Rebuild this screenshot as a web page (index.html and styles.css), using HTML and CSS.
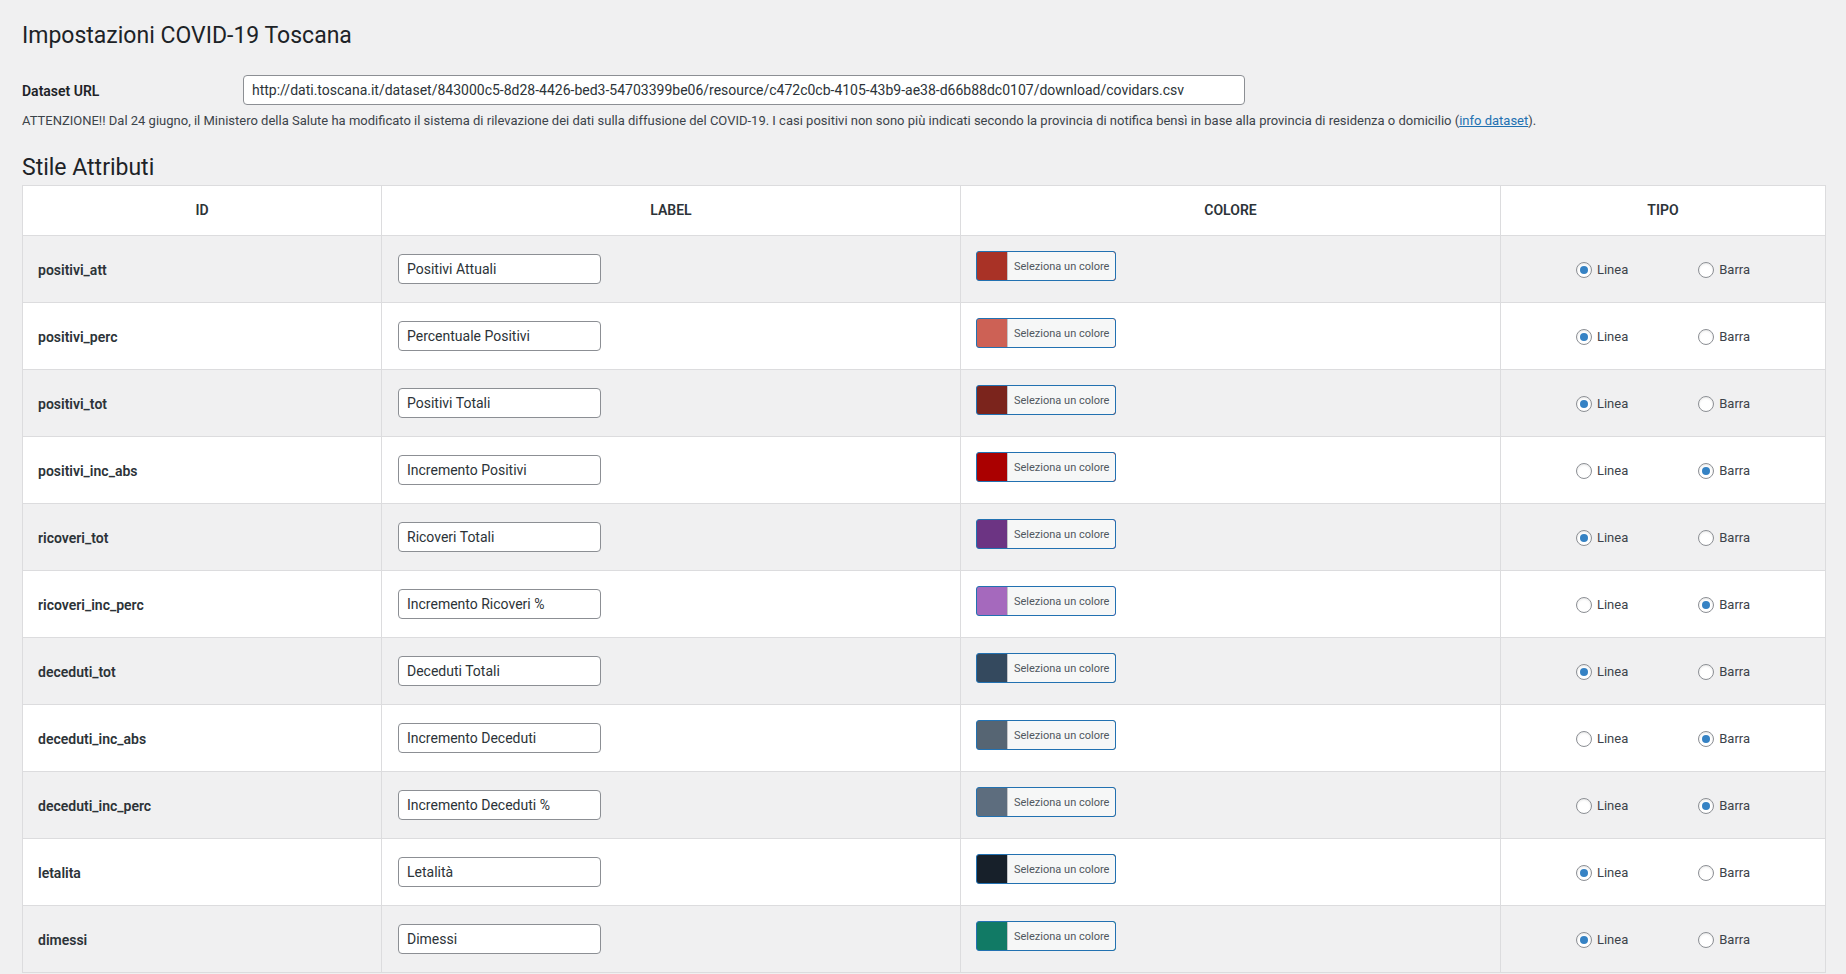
FILE: index.html
```html
<!DOCTYPE html>
<html lang="it">
<head>
<meta charset="utf-8">
<title>Impostazioni COVID-19 Toscana</title>
<link rel="stylesheet" href="styles.css">
</head>
<body>
<div class="wrap">
  <h1 class="page-title">Impostazioni COVID-19 Toscana</h1>

  <div class="form-row">
    <label class="form-label" for="dataset-url">Dataset URL</label>
    <input class="text-input url-input" id="dataset-url" type="text" value="http://dati.toscana.it/dataset/843000c5-8d28-4426-bed3-54703399be06/resource/c472c0cb-4105-43b9-ae38-d66b88dc0107/download/covidars.csv">
  </div>
  <p class="notice">ATTENZIONE!! Dal 24 giugno, il Ministero della Salute ha modificato il sistema di rilevazione dei dati sulla diffusione del COVID-19. I casi positivi non sono più indicati secondo la provincia di notifica bensì in base alla provincia di residenza o domicilio (<a href="#" class="link">info dataset</a>).</p>

  <h2 class="section-title">Stile Attributi</h2>

  <table class="attr-table">
    <colgroup>
      <col class="col-id">
      <col class="col-label">
      <col class="col-color">
      <col class="col-type">
    </colgroup>
    <thead>
      <tr><th>ID</th><th>LABEL</th><th>COLORE</th><th>TIPO</th></tr>
    </thead>
    <tbody>
      <tr>
        <td class="id-cell">positivi_att</td>
        <td><input class="text-input label-input" type="text" value="Positivi Attuali"></td>
        <td><button class="color-result" style="background-color:#a93226"><span class="color-result-text">Seleziona un colore</span></button></td>
        <td class="type-cell"><div class="radio-group"><label class="radio-opt"><input type="radio" name="t1" checked>Linea</label><label class="radio-opt"><input type="radio" name="t1">Barra</label></div></td>
      </tr>
      <tr>
        <td class="id-cell">positivi_perc</td>
        <td><input class="text-input label-input" type="text" value="Percentuale Positivi"></td>
        <td><button class="color-result" style="background-color:#cd6155"><span class="color-result-text">Seleziona un colore</span></button></td>
        <td class="type-cell"><div class="radio-group"><label class="radio-opt"><input type="radio" name="t2" checked>Linea</label><label class="radio-opt"><input type="radio" name="t2">Barra</label></div></td>
      </tr>
      <tr>
        <td class="id-cell">positivi_tot</td>
        <td><input class="text-input label-input" type="text" value="Positivi Totali"></td>
        <td><button class="color-result" style="background-color:#7b241c"><span class="color-result-text">Seleziona un colore</span></button></td>
        <td class="type-cell"><div class="radio-group"><label class="radio-opt"><input type="radio" name="t3" checked>Linea</label><label class="radio-opt"><input type="radio" name="t3">Barra</label></div></td>
      </tr>
      <tr>
        <td class="id-cell">positivi_inc_abs</td>
        <td><input class="text-input label-input" type="text" value="Incremento Positivi"></td>
        <td><button class="color-result" style="background-color:#aa0000"><span class="color-result-text">Seleziona un colore</span></button></td>
        <td class="type-cell"><div class="radio-group"><label class="radio-opt"><input type="radio" name="t4">Linea</label><label class="radio-opt"><input type="radio" name="t4" checked>Barra</label></div></td>
      </tr>
      <tr>
        <td class="id-cell">ricoveri_tot</td>
        <td><input class="text-input label-input" type="text" value="Ricoveri Totali"></td>
        <td><button class="color-result" style="background-color:#6c3483"><span class="color-result-text">Seleziona un colore</span></button></td>
        <td class="type-cell"><div class="radio-group"><label class="radio-opt"><input type="radio" name="t5" checked>Linea</label><label class="radio-opt"><input type="radio" name="t5">Barra</label></div></td>
      </tr>
      <tr>
        <td class="id-cell">ricoveri_inc_perc</td>
        <td><input class="text-input label-input" type="text" value="Incremento Ricoveri %"></td>
        <td><button class="color-result" style="background-color:#a569bd"><span class="color-result-text">Seleziona un colore</span></button></td>
        <td class="type-cell"><div class="radio-group"><label class="radio-opt"><input type="radio" name="t6">Linea</label><label class="radio-opt"><input type="radio" name="t6" checked>Barra</label></div></td>
      </tr>
      <tr>
        <td class="id-cell">deceduti_tot</td>
        <td><input class="text-input label-input" type="text" value="Deceduti Totali"></td>
        <td><button class="color-result" style="background-color:#34495e"><span class="color-result-text">Seleziona un colore</span></button></td>
        <td class="type-cell"><div class="radio-group"><label class="radio-opt"><input type="radio" name="t7" checked>Linea</label><label class="radio-opt"><input type="radio" name="t7">Barra</label></div></td>
      </tr>
      <tr>
        <td class="id-cell">deceduti_inc_abs</td>
        <td><input class="text-input label-input" type="text" value="Incremento Deceduti"></td>
        <td><button class="color-result" style="background-color:#566573"><span class="color-result-text">Seleziona un colore</span></button></td>
        <td class="type-cell"><div class="radio-group"><label class="radio-opt"><input type="radio" name="t8">Linea</label><label class="radio-opt"><input type="radio" name="t8" checked>Barra</label></div></td>
      </tr>
      <tr>
        <td class="id-cell">deceduti_inc_perc</td>
        <td><input class="text-input label-input" type="text" value="Incremento Deceduti %"></td>
        <td><button class="color-result" style="background-color:#5d6d7e"><span class="color-result-text">Seleziona un colore</span></button></td>
        <td class="type-cell"><div class="radio-group"><label class="radio-opt"><input type="radio" name="t9">Linea</label><label class="radio-opt"><input type="radio" name="t9" checked>Barra</label></div></td>
      </tr>
      <tr>
        <td class="id-cell">letalita</td>
        <td><input class="text-input label-input" type="text" value="Letalità"></td>
        <td><button class="color-result" style="background-color:#17202a"><span class="color-result-text">Seleziona un colore</span></button></td>
        <td class="type-cell"><div class="radio-group"><label class="radio-opt"><input type="radio" name="t10" checked>Linea</label><label class="radio-opt"><input type="radio" name="t10">Barra</label></div></td>
      </tr>
      <tr>
        <td class="id-cell">dimessi</td>
        <td><input class="text-input label-input" type="text" value="Dimessi"></td>
        <td><button class="color-result" style="background-color:#117a65"><span class="color-result-text">Seleziona un colore</span></button></td>
        <td class="type-cell"><div class="radio-group"><label class="radio-opt"><input type="radio" name="t11" checked>Linea</label><label class="radio-opt"><input type="radio" name="t11">Barra</label></div></td>
      </tr>
    </tbody>
  </table>
</div>
</body>
</html>
```

FILE: styles.css
```css
html, body {
  margin: 0;
  padding: 0;
  background: #f0f0f1;
}
body {
  font-family: Roboto, "Liberation Sans", sans-serif;
  font-size: 13px;
  line-height: 1.4em;
  color: #3c434a;
}
.wrap {
  padding: 21px 21px 0 22px;
}
.page-title {
  margin: 0;
  font-size: 23px;
  font-weight: 400;
  line-height: 30px;
  color: #1d2327;
}
.form-row {
  display: flex;
  align-items: center;
  margin-top: 24px;
}
.form-label {
  width: 220px;
  font-size: 14px;
  font-weight: 600;
  color: #1d2327;
  line-height: 20px;
  padding-top: 2px;
}
.text-input {
  box-sizing: border-box;
  height: 30px;
  margin: 0 1px;
  padding: 0 8px;
  border: 1px solid #8c8f94;
  border-radius: 4px;
  background: #fff;
  font-family: Roboto, "Liberation Sans", sans-serif;
  font-size: 14px;
  line-height: 28px;
  color: #2c3338;
  box-shadow: 0 0 0 transparent;
}
.url-input {
  width: 1002px;
}
.notice {
  margin: 6px 0 0;
  font-size: 13px;
  line-height: 19.5px;
}
.link {
  color: #2271b1;
  text-decoration: underline;
}
.section-title {
  margin: 22px 0 2px;
  font-size: 23px;
  font-weight: 400;
  line-height: 30px;
  color: #1d2327;
}
.attr-table {
  width: 1803px;
  table-layout: fixed;
  border-collapse: collapse;
  border: 1px solid #dcdcde;
}
.col-id { width: 359px; }
.col-label { width: 579px; }
.col-color { width: 540px; }
.col-type { width: 325px; }
.attr-table th,
.attr-table td {
  border: 1px solid #dcdcde;
  padding: 15px;
  vertical-align: middle;
  text-align: left;
}
.attr-table th {
  padding: 15px;
  background: #fff;
  text-align: center;
  font-size: 14px;
  font-weight: 600;
  line-height: 19px;
  color: #2c3338;
}
.attr-table tbody tr:nth-child(odd) td {
  background: #f0f0f1;
}
.attr-table tbody tr:nth-child(even) td {
  background: #fff;
}
.attr-table .id-cell {
  padding-top: 16px;
  padding-bottom: 14px;
  font-size: 14px;
  font-weight: 600;
  line-height: 20px;
  color: #2c3338;
}
.attr-table .type-cell {
  padding-top: 16px;
  padding-bottom: 14px;
}
.label-input {
  width: 203px;
  display: block;
}
.color-result {
  display: block;
  box-sizing: border-box;
  height: 30px;
  margin: 0 6px 6px 0;
  padding: 0 0 0 30px;
  border: 1px solid #2271b1;
  border-radius: 3px;
  font-family: Roboto, "Liberation Sans", sans-serif;
  font-size: 11px;
  cursor: pointer;
  overflow: hidden;
}
.color-result-text {
  display: block;
  height: 28px;
  padding: 0 6px;
  border-left: 1px solid #c3c4c7;
  border-radius: 0 2px 2px 0;
  background: #f6f7f7;
  color: #50575e;
  line-height: 30px;
  white-space: nowrap;
}
.radio-group {
  display: flex;
  justify-content: center;
  align-items: center;
  gap: 70px;
}
.radio-opt {
  display: flex;
  align-items: center;
  font-size: 13px;
  line-height: 18px;
  color: #3c434a;
}
.radio-opt input {
  -webkit-appearance: none;
  appearance: none;
  box-sizing: border-box;
  width: 16px;
  height: 16px;
  margin: 0 5px 0 0;
  border: 1px solid #8c8f94;
  border-radius: 50%;
  background: #fff;
  box-shadow: inset 0 1px 2px rgba(0,0,0,.1);
  display: inline-flex;
  align-items: center;
  justify-content: center;
}
.radio-opt input:checked::before {
  content: "";
  width: 8px;
  height: 8px;
  border-radius: 50%;
  background: #3582c4;
}
```
